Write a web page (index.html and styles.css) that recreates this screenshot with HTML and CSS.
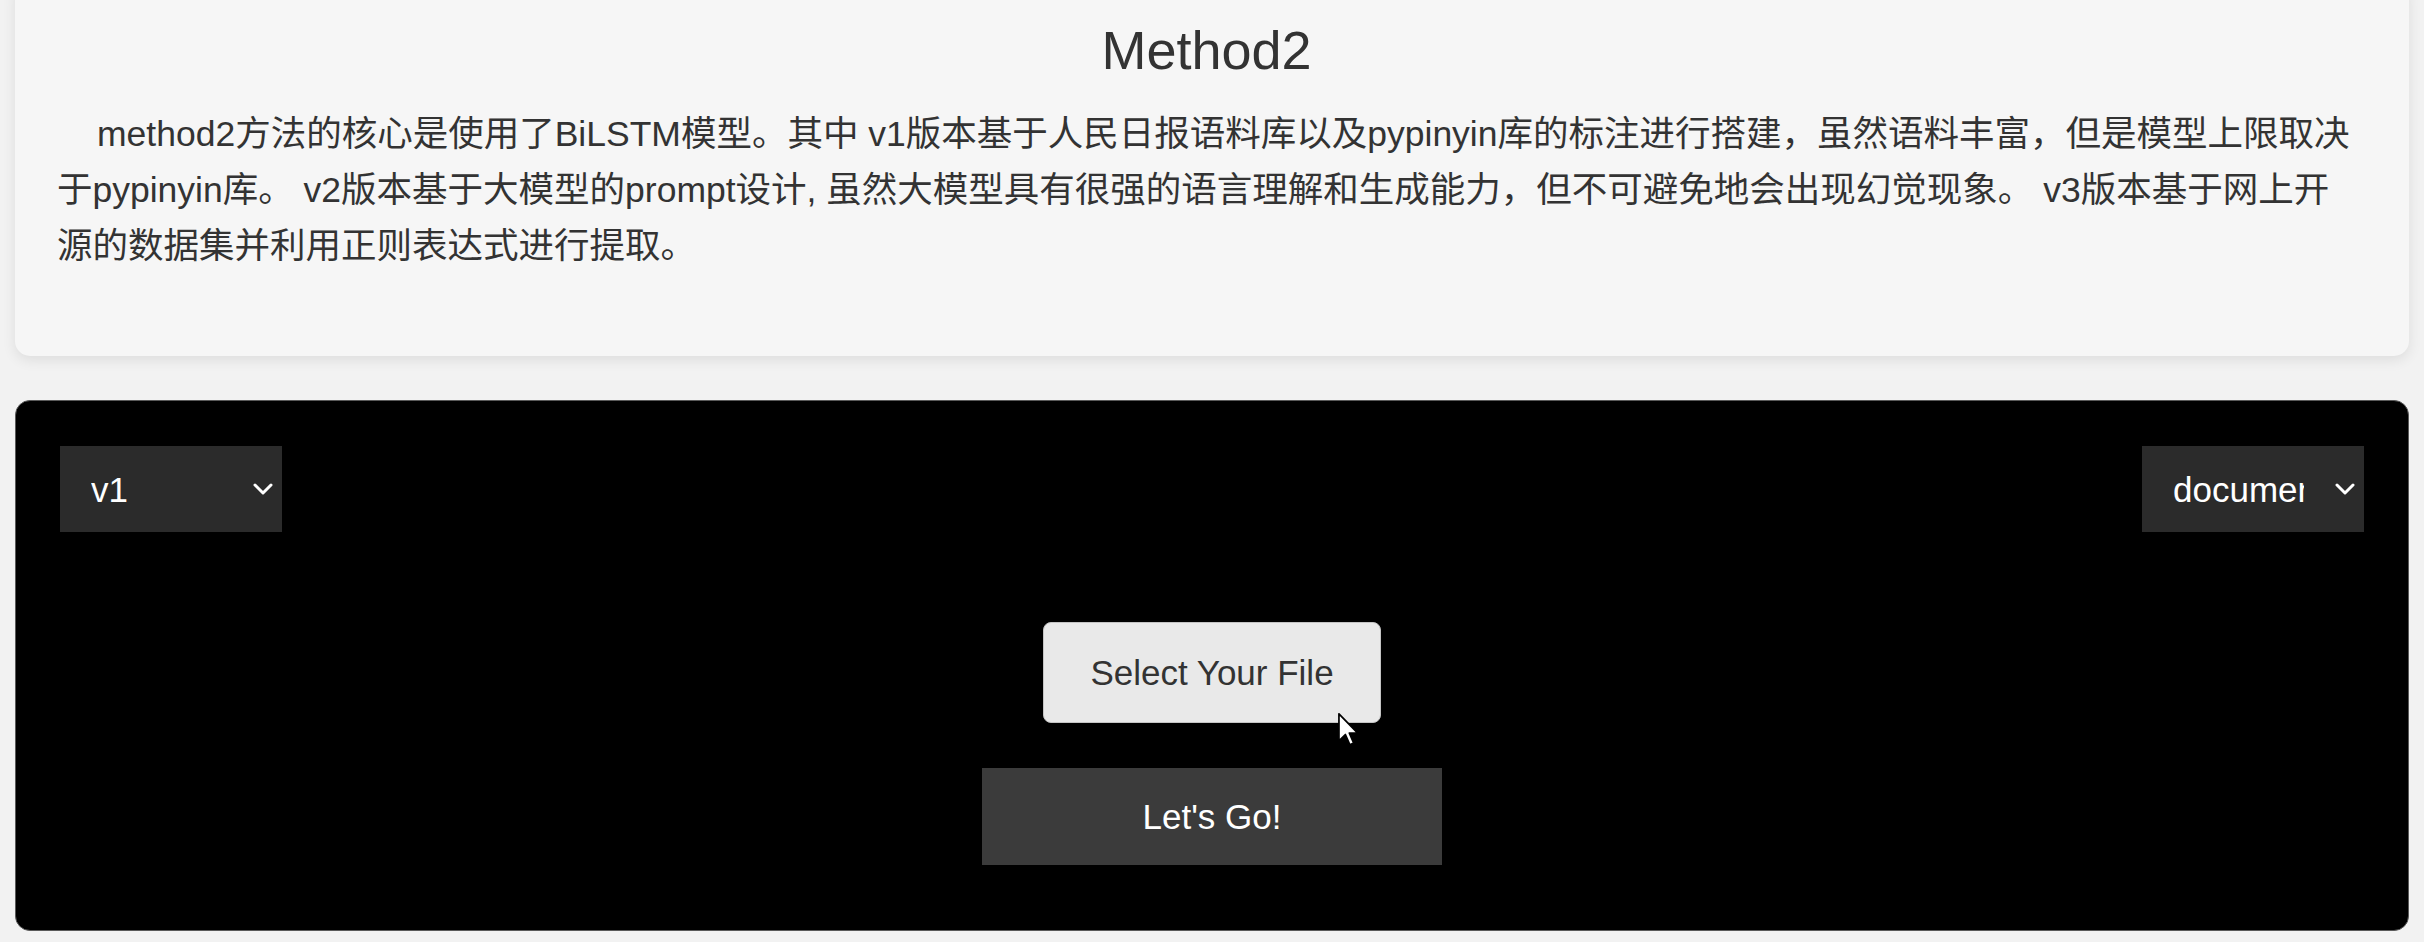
FILE: index.html
```html
<!DOCTYPE html>
<html lang="zh-CN">
<head>
<meta charset="utf-8">
<title>Method2</title>
<link rel="stylesheet" href="styles.css">
</head>
<body>
<div class="page">
  <section class="card intro">
    <h1 class="title">Method2</h1>
    <p class="desc">method2方法的核心是使用了BiLSTM模型。其中 v1版本基于人民日报语料库以及pypinyin库的标注进行搭建，虽然语料丰富，但是模型上限取决于pypinyin库。 v2版本基于大模型的prompt设计, 虽然大模型具有很强的语言理解和生成能力，但不可避免地会出现幻觉现象。 v3版本基于网上开源的数据集并利用正则表达式进行提取。</p>
  </section>
  <section class="panel">
    <div class="panel-top">
      <div class="select-wrap">
        <select class="select">
          <option>v1</option>
          <option>v2</option>
          <option>v3</option>
        </select>
        <svg class="chev" viewBox="0 0 20 12" width="20" height="12"><polyline points="2,2 10,10 18,2" fill="none" stroke="#fff" stroke-width="3" stroke-linecap="round" stroke-linejoin="round"/></svg>
      </div>
      <div class="select-wrap">
        <select class="select">
          <option>document</option>
          <option>sentence</option>
        </select>
        <svg class="chev" viewBox="0 0 20 12" width="20" height="12"><polyline points="2,2 10,10 18,2" fill="none" stroke="#fff" stroke-width="3" stroke-linecap="round" stroke-linejoin="round"/></svg>
      </div>
    </div>
    <div class="actions">
      <button class="file-btn" type="button">Select Your File</button>
      <button class="go-btn" type="button">Let's Go!</button>
    </div>
    <svg class="cursor" viewBox="0 0 12 19" width="21" height="33"><path d="M0.5 0.5 L0.5 16 L4.2 12.4 L6.8 18.3 L9 17.3 L6.5 11.6 L11.3 11.6 Z" fill="#fff" stroke="#000" stroke-width="1" stroke-linejoin="round"/></svg>
  </section>
</div>
</body>
</html>
```
FILE: styles.css
```css
* { box-sizing: border-box; }

html, body {
  margin: 0;
  padding: 0;
  background: #f2f2f2;
  font-family: "Liberation Sans", "Noto Sans CJK SC", Arial, sans-serif;
  color: #333;
  overflow: hidden;
}

.page {
  display: flex;
  flex-direction: column;
  gap: 44px;
  padding: 0 15px;
}

.card {
  background: #f6f6f6;
  border-radius: 15px;
  box-shadow: 0 4px 14px rgba(0, 0, 0, 0.09);
  margin-top: -20px;
  padding: 39px 53px 82px 42px;
}

.title {
  margin: 0 0 25px;
  font-size: 54px;
  line-height: 62px;
  font-weight: normal;
  text-align: center;
  color: #333;
}

.desc {
  margin: 0;
  font-size: 35.5px;
  line-height: 56px;
  text-indent: 40px;
  color: #333;
}

.panel {
  position: relative;
  background: #000;
  border: 1px solid #5a5a5a;
  border-radius: 15px;
  padding: 45px 44px 65px;
  display: flex;
  flex-direction: column;
  gap: 90px;
}

.panel-top {
  display: flex;
  justify-content: space-between;
}

.select-wrap {
  position: relative;
  width: 222px;
  height: 86px;
}

.select {
  appearance: none;
  -webkit-appearance: none;
  width: 100%;
  height: 100%;
  background: #2b2b2b;
  color: #fff;
  border: none;
  border-radius: 0;
  padding: 0 60px 0 31px;
  font-family: "Liberation Sans", Arial, sans-serif;
  font-size: 35px;
  outline: none;
}

.chev {
  position: absolute;
  right: 9px;
  top: 37px;
  pointer-events: none;
}

.actions {
  display: flex;
  flex-direction: column;
  align-items: center;
  gap: 45px;
}

.file-btn {
  width: 338px;
  height: 101px;
  background: #e9e9e9;
  color: #333;
  border: 1px solid #c4c4c4;
  border-radius: 8px;
  font-family: "Liberation Sans", Arial, sans-serif;
  font-size: 35px;
}

.go-btn {
  width: 460px;
  height: 97px;
  background: #3b3b3b;
  color: #fff;
  border: none;
  border-radius: 0;
  font-family: "Liberation Sans", Arial, sans-serif;
  font-size: 35px;
}

.cursor {
  position: absolute;
  left: 1322px;
  top: 312px;
}
```
